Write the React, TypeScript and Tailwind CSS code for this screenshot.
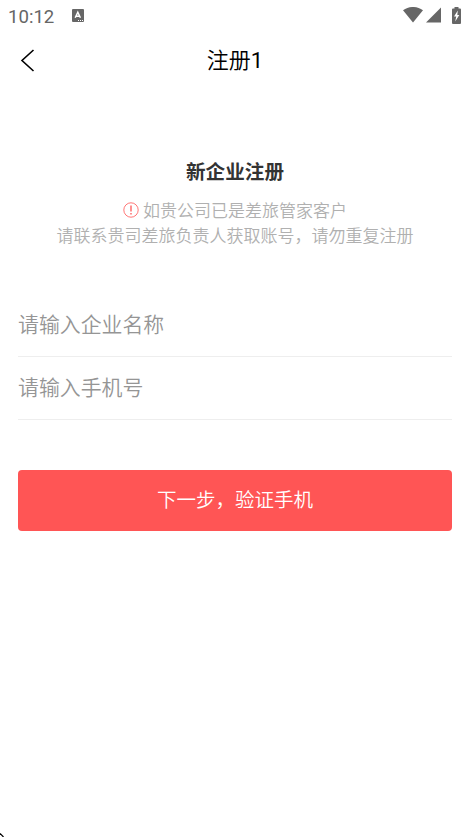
interface FieldProps {
  name: string;
  placeholder: string;
  type?: string;
}

const StatusBar: React.FC = () => (
  <div className="flex items-center h-8 pl-2 pr-2 text-[#666666]">
    <span className="font-['Roboto',sans-serif] text-[18.6px] font-normal leading-8 w-[64px] pt-px">10:12</span>
    <svg className="w-3 h-[14px]" viewBox="0 0 12 14">
      <rect x="0" y="0" width="12" height="13" rx="1" fill="#666666" />
      <path d="M3.200 8.800 5.800 3.200 8.400 8.800M4.200 7.200h3.200" fill="none" stroke="#fff" strokeWidth="1.5" />
      <path d="M6 11.500h1M8 11.500h1M10 11.500h1" stroke="#fff" strokeWidth="1" />
    </svg>
    <div className="flex items-center ml-auto -mt-[2px]">
      <svg className="w-5 h-4" viewBox="0 0 20 16">
        <path d="M0 3.2C6-1.1 14-1.1 20 3.2L10 15.5Z" fill="#666666" />
      </svg>
      <svg className="w-[15px] h-4 ml-[3px]" viewBox="0 0 15 16">
        <path d="M15 0.5v15H0Z" fill="#666666" />
      </svg>
      <svg className="w-[9px] h-[17px] ml-[11px] mr-px" viewBox="0 0 9 17">
        <path d="M2.5 0h4v1.500H8a1 1 0 0 1 1 1v13.500a1 1 0 0 1-1 1H1a1 1 0 0 1-1-1V2.500a1 1 0 0 1 1-1h1.500Z" fill="#666666" />
        <path d="M5.800 3.500 2 9.500h2.200L3.200 14.500 7.300 8H5.300Z" fill="#fff" />
      </svg>
    </div>
  </div>
);

const Field: React.FC<FieldProps> = ({ name, placeholder, type = 'text' }) => (
  <input
    name={name}
    type={type}
    placeholder={placeholder}
    className="block w-full h-[63px] pb-[5px] border-b border-[#eeeeee] text-[20.9px] font-[350] text-[#333333] placeholder:text-[#959595] outline-none"
  />
);

export default function App() {
  return (
    <div className="relative flex flex-col w-full h-screen overflow-hidden bg-white font-['Noto_Sans_CJK_SC',sans-serif]">
      <StatusBar />

      <header className="grid grid-cols-[1fr_auto_1fr] items-center h-14 px-5">
        <button className="w-4 h-6" aria-label="返回">
          <svg className="w-4 h-6" viewBox="0 0 16 24">
            <path d="M13.500 2 2 12.500 13.500 23" fill="none" stroke="#000" strokeWidth="1.6" />
          </svg>
        </button>
        <h1 className="pb-[2px] text-[22px] font-[350] text-black leading-8">
          注册<span className="font-['Roboto',sans-serif] font-normal">1</span>
        </h1>
      </header>

      <main className="px-[18px] pt-[67px]">
        <section className="text-center">
          <h2 className="text-[19.6px] font-bold leading-8 text-[#333333]">新企业注册</h2>
          <div className="mt-[10px] text-[17px] font-[350] leading-[25px] text-[#b0b0b0]">
            <p className="flex items-center justify-center">
              <svg className="w-4 h-4 mr-1" viewBox="0 0 16 16">
                <circle cx="8" cy="8" r="7.200" fill="none" stroke="#ff5555" strokeWidth="0.8" />
                <path d="M8 3.500v6" stroke="#ff5555" strokeWidth="1.300" />
                <path d="M8 11v1.500" stroke="#ff5555" strokeWidth="1.300" />
              </svg>
              如贵公司已是差旅管家客户
            </p>
            <p className="whitespace-nowrap">请联系贵司差旅负责人获取账号，请勿重复注册</p>
          </div>
        </section>

        <form className="mt-[47px]">
          <Field name="company" placeholder="请输入企业名称" />
          <Field name="phone" placeholder="请输入手机号" type="tel" />
          <button
            type="button"
            className="block w-full h-[61.400px] mt-[49.600px] pb-[3px] rounded-[4px] bg-[#ff5555] text-[19.5px] font-[350] text-white"
          >
            下一步，验证手机
          </button>
        </form>
      </main>

      <svg className="absolute left-0 bottom-0 w-1 h-1" viewBox="0 0 4 4">
        <path d="M0 0.500 3.500 4" stroke="#000" strokeWidth="1.200" />
      </svg>
    </div>
  );
}
